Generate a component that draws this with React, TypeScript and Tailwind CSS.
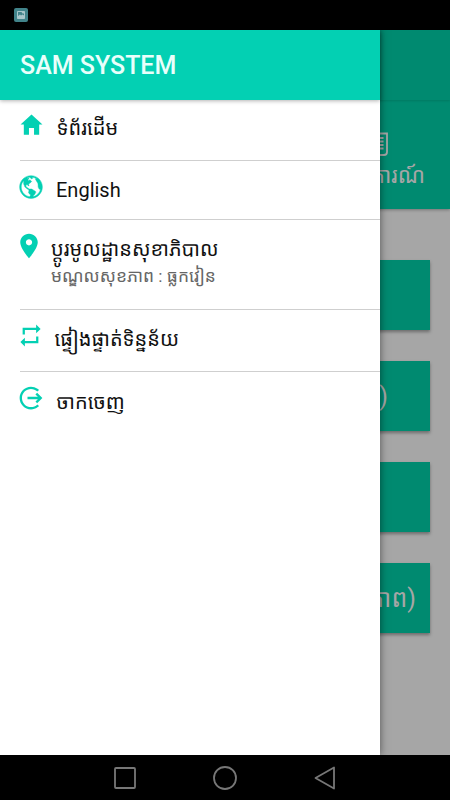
import React from 'react';
import { IoMdGlobe, IoMdHome, IoMdLogOut, IoMdPin, IoMdRepeat } from 'react-icons/io';

function StatusBar() {
  return (
    <div className="h-[30px] shrink-0 bg-black pl-[14px] pt-2">
      <svg viewBox="0 0 14 14" className="size-[14px]">
        <rect width="14" height="14" rx="2" fill="#41838a" />
        <rect x="3" y="3" width="8" height="8" rx="0.8" fill="#a9c6ca" />
        <path d="M4 4 h3.5 l1 1.5 h1.5 v2 l-1.5 -1 l-1.5 1 l-1 -1 l-2 1.5 z" fill="#41838a" />
      </svg>
    </div>
  );
}

function Tile({ children }: { children?: React.ReactNode }) {
  return (
    <div className="flex h-[70px] items-center justify-end bg-[#008a70] text-[25px] whitespace-nowrap text-[#a6a6a6] shadow-[0_2px_3px_rgba(0,0,0,0.35)]">
      {children}
    </div>
  );
}

function Page() {
  return (
    <div className="flex h-full flex-col bg-[#a6a6a6]">
      <div className="relative h-[70px] shrink-0 bg-[#008a70] shadow-[0_1px_2px_rgba(0,0,0,0.12)]" />
      <div className="flex h-[109px] shrink-0 flex-col items-end bg-[#008a70] pt-8 pr-[25px] text-[#a6a6a6] shadow-[0_1px_3px_rgba(0,0,0,0.3)]">
        <svg viewBox="0 0 26 24" className="mr-[37px] h-6 w-[26px]" fill="none" stroke="currentColor" strokeWidth="1.8">
          <path d="M6 1.5 H25 V20 Q25 23 22 23 H4 Q1 23 1 20 V6 H6 V20" />
          <path d="M9 6 H21.5 M9 9.5 H21.5 M9 13 H21.5 M9 16.5 H21.5" />
        </svg>
        <span className="mt-0.5 text-[22px] leading-[36px]">របាយការណ៍</span>
      </div>
      <div className="flex flex-col gap-[31px] px-5 pt-[51px]">
        <Tile />
        <Tile>
          <span className="pt-0.5 pr-[42px]">)</span>
        </Tile>
        <Tile />
        <Tile>
          <span className="pt-0.5 pr-[14px]">(សុខភាព)</span>
        </Tile>
      </div>
    </div>
  );
}

function Drawer() {
  return (
    <aside className="absolute inset-y-0 left-0 w-[380px] bg-white text-xl text-[#111] shadow-[0_0_8px_rgba(0,0,0,0.5)]">
      <header className="flex h-[70px] items-center bg-[#03d0b3] pt-px pl-5 text-[25px] font-medium text-[#e9fffb] shadow-[0_1px_4px_rgba(0,0,0,0.3)]">
        SAM SYSTEM
      </header>
      <nav className="pl-5">
        <div className="flex h-[61px] border-b border-[#cfcfcf]">
          <IoMdHome className="mt-[11px] -ml-[2px] size-[27px] text-[#03d0b3]" />
          <span className="mt-[14px] ml-[11.5px] leading-7">ទំព័រដើម</span>
        </div>
        <div className="flex h-[59px] border-b border-[#cfcfcf]">
          <IoMdGlobe className="mt-3 -ml-[3px] size-[28px] text-[#03d0b3]" stroke="currentColor" strokeWidth="8" />
          <span className="mt-[15px] ml-[11px] leading-7">English</span>
        </div>
        <div className="flex h-[90px] border-b border-[#cfcfcf]">
          <IoMdPin className="mt-3 -ml-[5px] size-[28px] text-[#03d0b3]" />
          <div className="mt-[15px] ml-2 flex flex-col">
            <span className="leading-7">ប្តូរមូលដ្ឋានសុខាភិបាល</span>
            <span className="text-[17.4px] leading-[27px] text-[#666]">មណ្ឌលសុខភាព : ធ្លកវៀន</span>
          </div>
        </div>
        <div className="flex h-[62px] border-b border-[#cfcfcf]">
          <IoMdRepeat className="mt-3 -ml-[3px] size-[27px] text-[#03d0b3]" />
          <span className="mt-[15px] ml-[10.5px] leading-7">ផ្ទៀងផ្ទាត់ទិន្នន័យ</span>
        </div>
        <div className="flex h-[62px]">
          <IoMdLogOut className="mt-3 -ml-[3px] size-[28px] text-[#03d0b3]" />
          <span className="mt-4 ml-[11.5px] leading-7">ចាកចេញ</span>
        </div>
      </nav>
    </aside>
  );
}

function NavBar() {
  return (
    <div className="flex h-[45px] shrink-0 items-center justify-center gap-[76px] bg-black text-[#777]">
      <svg viewBox="0 0 24 24" className="size-6" fill="none" stroke="currentColor" strokeWidth="1.8">
        <rect x="2" y="2" width="20" height="20" rx="1" />
      </svg>
      <svg viewBox="0 0 24 24" className="size-6" fill="none" stroke="currentColor" strokeWidth="1.8">
        <circle cx="12" cy="12" r="11" />
      </svg>
      <svg viewBox="0 0 24 24" className="size-6" fill="none" stroke="currentColor" strokeWidth="1.8" strokeLinejoin="round">
        <path d="M21 1.5 V22.5 L2.5 12 Z" />
      </svg>
    </div>
  );
}

export default function App() {
  return (
    <div className="flex h-[800px] w-[450px] flex-col overflow-hidden font-['Roboto','Noto_Sans_Khmer',sans-serif]">
      <StatusBar />
      <main className="relative min-h-0 flex-1 overflow-hidden">
        <Page />
        <Drawer />
      </main>
      <NavBar />
    </div>
  );
}
